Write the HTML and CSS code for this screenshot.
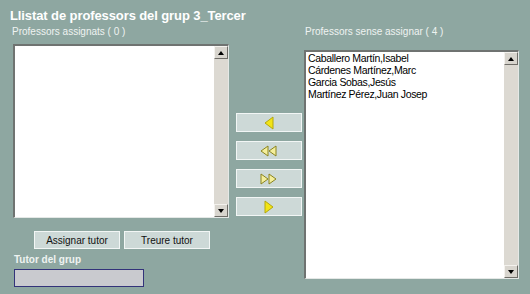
FILE: index.html
```html
<!DOCTYPE html>
<html>
<head>
    <title>Llistat de professors</title>
    <link rel="stylesheet" href="styles.css">
</head>
<body>
<div class="page">
    <h1 class="title">Llistat de professors del grup 3_Tercer</h1>
    <div class="columns">
        <div class="col-left">
            <div class="caption">Professors assignats ( 0 )</div>
            <div class="listbox list-left">
                <div class="list-items"></div>
                <div class="scrollbar">
                    <div class="sb-btn"><span class="tri-up"></span></div>
                    <div class="sb-track"></div>
                    <div class="sb-btn"><span class="tri-down"></span></div>
                </div>
            </div>
            <div class="tutor-buttons">
                <button class="btn btn-tutor">Assignar tutor</button>
                <button class="btn btn-tutor">Treure tutor</button>
            </div>
            <div class="tutor-label">Tutor del grup</div>
            <div class="tutor-field"></div>
        </div>

        <div class="col-mid">
            <button class="btn btn-move"><svg width="10" height="14" viewBox="0 0 10 14"><polygon points="9,1 1,7 9,13" class="arrow-fill"/></svg></button>
            <button class="btn btn-move"><svg width="18" height="12" viewBox="0 0 18 12"><polygon points="8,1 1,6 8,11" class="arrow-open"/><polygon points="16,1 9,6 16,11" class="arrow-open"/></svg></button>
            <button class="btn btn-move"><svg width="18" height="12" viewBox="0 0 18 12"><polygon points="1,1 8,6 1,11" class="arrow-open"/><polygon points="9,1 16,6 9,11" class="arrow-open"/></svg></button>
            <button class="btn btn-move"><svg width="10" height="14" viewBox="0 0 10 14"><polygon points="1,1 9,7 1,13" class="arrow-fill"/></svg></button>
        </div>

        <div class="col-right">
            <div class="caption caption-right">Professors sense assignar ( 4 )</div>
            <div class="listbox list-right">
                <div class="list-items">
                    <div>Caballero Mart&iacute;n,Isabel</div>
                    <div>C&aacute;rdenes Mart&iacute;nez,Marc</div>
                    <div>Garcia Sobas,Jes&uacute;s</div>
                    <div>Mart&iacute;nez P&eacute;rez,Juan Josep</div>
                </div>
                <div class="scrollbar">
                    <div class="sb-btn"><span class="tri-up"></span></div>
                    <div class="sb-track"></div>
                    <div class="sb-btn"><span class="tri-down"></span></div>
                </div>
            </div>
        </div>
    </div>
</div>
</body>
</html>
```

FILE: styles.css
```css
body, html {
    margin: 0;
    background: #8ea7a1;
    font-family: "Liberation Sans", Arial, sans-serif;
}

.page {
    width: 530px;
    height: 294px;
    padding: 8px 0 0 0;
    box-sizing: border-box;
}

.title {
    margin: 0 0 0 10px;
    font-size: 13px;
    font-weight: bold;
    color: #ffffff;
    line-height: 16px;
    letter-spacing: -0.1px;
}

.columns {
    display: flex;
    margin-top: 2px;
}

.col-left {
    margin-left: 13px;
    width: 216px;
}

.caption {
    font-size: 10px;
    color: #eef3f1;
    line-height: 12px;
    margin-left: -1px;
    height: 18px;
}

.caption-right {
    height: 24px;
    margin-left: 1px;
}

.listbox {
    display: flex;
    background: #ffffff;
    border-top: 2px solid #6f7371;
    border-left: 2px solid #6f7371;
    border-right: 1px solid #e4e8e6;
    border-bottom: 1px solid #e4e8e6;
    box-sizing: border-box;
}

.list-left {
    height: 174px;
}

.list-right {
    height: 229px;
    width: 215px;
}

.list-items {
    flex: 1;
    font-size: 10.5px;
    line-height: 12px;
    color: #000;
    padding: 0 2px;
    letter-spacing: -0.35px;
}

.scrollbar {
    width: 14px;
    display: flex;
    flex-direction: column;
    background: #d8d5ce;
    border-left: 1px solid #ffffff;
}

.sb-btn {
    height: 13px;
    background: #d8d5ce;
    border-top: 1px solid #f4f2ee;
    border-left: 1px solid #f4f2ee;
    border-right: 1px solid #6f6d68;
    border-bottom: 1px solid #6f6d68;
    box-sizing: border-box;
    display: flex;
    align-items: center;
    justify-content: center;
}

.sb-track {
    flex: 1;
    background: #dcd9d2;
}

.tri-up {
    width: 0;
    height: 0;
    border-left: 3px solid transparent;
    border-right: 3px solid transparent;
    border-bottom: 4px solid #000;
}

.tri-down {
    width: 0;
    height: 0;
    border-left: 3px solid transparent;
    border-right: 3px solid transparent;
    border-top: 4px solid #000;
}

.btn {
    font-family: "Liberation Sans", Arial, sans-serif;
    background: #cdd9d7;
    border: 1px solid #f2f6f5;
    box-sizing: border-box;
    padding: 0;
    display: flex;
    align-items: center;
    justify-content: center;
}

.tutor-buttons {
    display: flex;
    gap: 4px;
    margin: 13px 0 0 21px;
}

.btn-tutor {
    width: 86px;
    height: 18px;
    font-size: 10px;
    color: #111;
}

.tutor-label {
    margin: 5px 0 0 1px;
    font-size: 10px;
    font-weight: bold;
    color: #eef3f1;
    line-height: 12px;
}

.tutor-field {
    margin: 3px 0 0 1px;
    width: 130px;
    height: 18px;
    background: #c9cacf;
    border: 1px solid #33337a;
    box-sizing: border-box;
}

.col-mid {
    width: 66px;
    margin-left: 7px;
    padding-top: 87px;
    display: flex;
    flex-direction: column;
    gap: 9px;
}

.btn-move {
    width: 66px;
    height: 19px;
}

.arrow-fill {
    fill: #f2e416;
    stroke: #b4a80c;
    stroke-width: 1;
}

.arrow-open {
    fill: #f4ee9a;
    stroke: #8a8420;
    stroke-width: 1;
}

.col-right {
    margin-left: 2px;
}
```
